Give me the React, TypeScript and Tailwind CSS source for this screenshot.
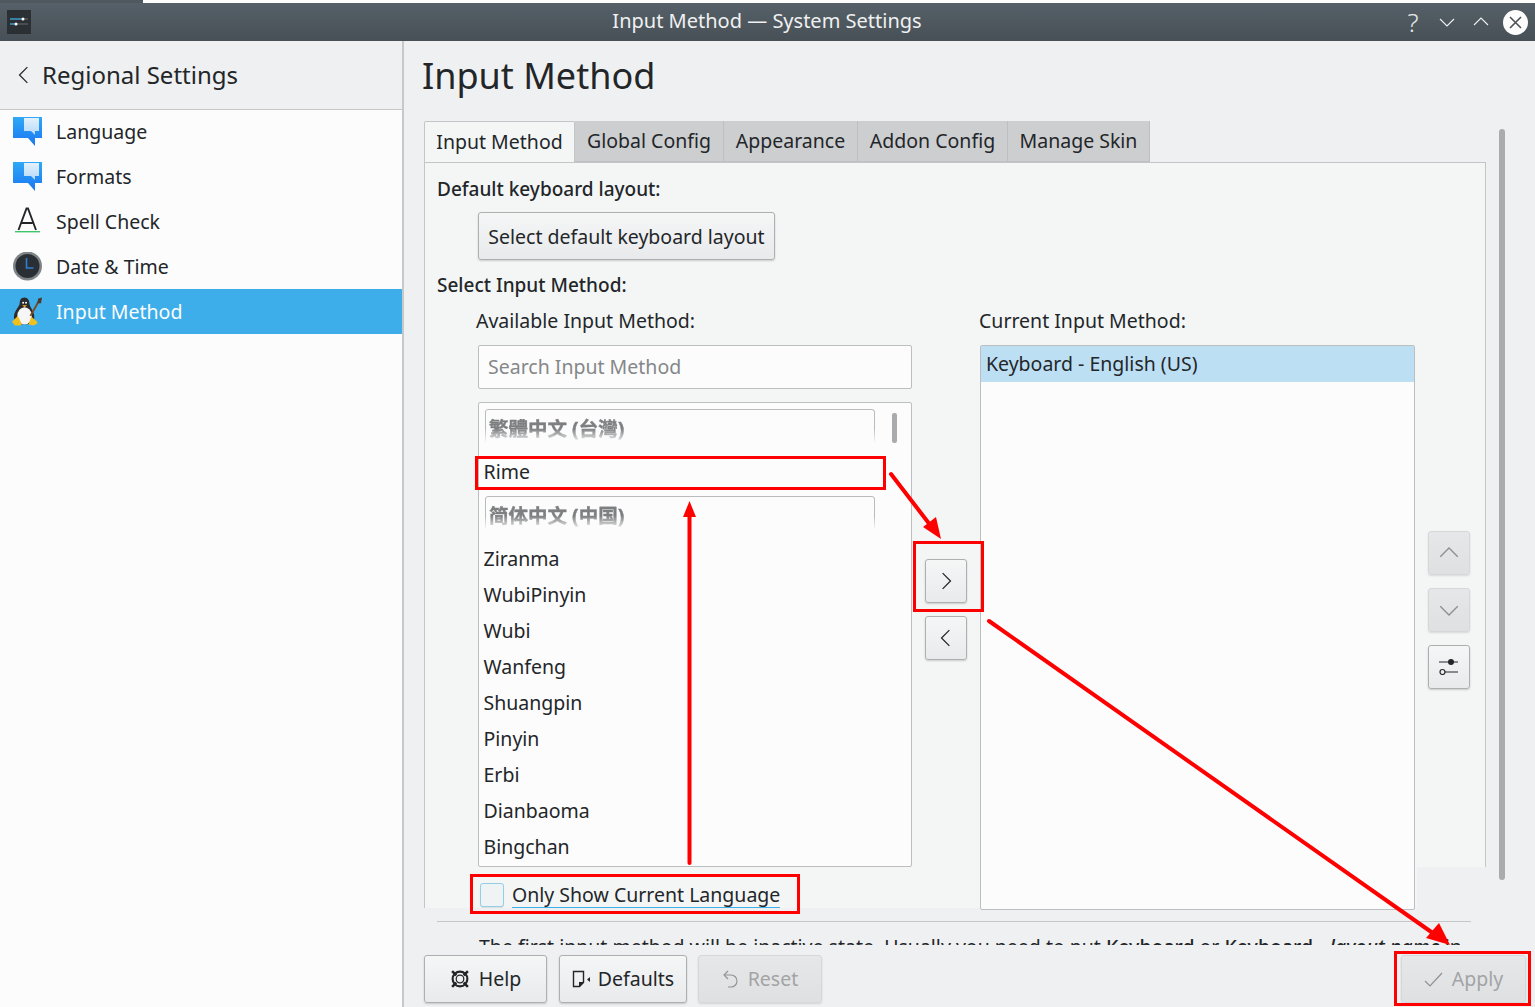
import React from "react";

const btn = "flex items-center justify-center rounded-[3px] border border-[#adafb1] bg-gradient-to-b from-[#f5f6f6] to-[#e9eaec] shadow-[0_1px_2px_rgba(0,0,0,0.18)]";
const off = "flex items-center justify-center rounded-[3px] border border-[#d6d7d9] bg-gradient-to-b from-[#e6e7e9] to-[#dfe0e2] shadow-[0_1px_2px_rgba(0,0,0,0.12)]";

function Bubble({ id }: { id: string }) {
  return (
    <svg width="30" height="30" viewBox="0 0 30 30">
      <defs>
        <linearGradient id={`bb${id}`} x1="0" y1="0" x2="0" y2="1"><stop offset="0" stopColor="#2fa8f6" /><stop offset="1" stopColor="#1a76f2" /></linearGradient>
        <linearGradient id={`bw${id}`} x1="0" y1="0" x2="0" y2="1"><stop offset="0" stopColor="#e4f1fc" /><stop offset="1" stopColor="#b5d9f8" /></linearGradient>
      </defs>
      <path d="M0 0h29v21h-7v8l-7-8H0z" fill={`url(#bb${id})`} />
      <path d="M11 1h15v13h-4v4l-4-4h-7z" fill={`url(#bw${id})`} />
    </svg>
  );
}
function SpellA() {
  return (
    <svg width="30" height="30" viewBox="0 0 30 30">
      <path d="M5.500 23 13.500 1.500h1.500L23 23M8.500 16h11" fill="none" stroke="#232629" strokeWidth="1.9" />
      <rect x="2" y="24" width="25" height="1.4" fill="#3fc66d" />
    </svg>
  );
}
function Clock() {
  return (
    <svg width="30" height="30" viewBox="0 0 30 30">
      <circle cx="14.500" cy="14" r="14.500" fill="#7f8487" />
      <circle cx="14.500" cy="14" r="12" fill="#2a2f36" />
      <path d="M13.500 6v10h7" fill="none" stroke="#2f7fd0" strokeWidth="1.6" />
    </svg>
  );
}
function Tux() {
  return (
    <svg width="32" height="32" viewBox="0 0 32 32">
      <path d="M13 1c-4 0-5 3-5 6 0 3-6 8-6 14 0 4 3 8 11 8s10-4 10-8c0-6-5-10-5-14 0-3-2-6-5-6z" fill="#2b2b2b" />
      <ellipse cx="13" cy="20" rx="7.500" ry="9" fill="#f6f6f6" />
      <circle cx="11.500" cy="6.500" r="1" fill="#fff" /><circle cx="14.500" cy="6.500" r="1" fill="#fff" />
      <path d="M10.500 9h5l-2.500 2z" fill="#f5b921" />
      <path d="M0 26l6-6 4 8-1 2H3zM17 29l3-8 6 5v2l-4 2z" fill="#f2c01e" />
      <path d="M19 20l8-14" stroke="#7a4a22" strokeWidth="2" />
      <path d="M26 7l1-5 4-1-1 6z" fill="#4a3a30" />
    </svg>
  );
}
function Sliders() {
  return (
    <svg width="20" height="16" viewBox="0 0 20 16">
      <path d="M0 3h19M5 13h14" stroke="#232629" strokeWidth="1.2" />
      <circle cx="12" cy="3" r="3" fill="#232629" />
      <circle cx="3.500" cy="13" r="2.500" fill="#f0f1f2" stroke="#232629" strokeWidth="1.200" />
    </svg>
  );
}
function Chevron({ dir, color = "#232629", size = 16 }: { dir: "l" | "r" | "u" | "d"; color?: string; size?: number }) {
  const d = { l: "M11 1 4 8l7 7", r: "M5 1l7 7-7 7", u: "M1 11l7-7 7 7", d: "M1 5l7 7 7-7" }[dir];
  return <svg width={size} height={size} viewBox="0 0 16 16"><path d={d} fill="none" stroke={color} strokeWidth="1.1" /></svg>;
}

const nav = [
  { label: "Language", icon: <Bubble id="a" />, h: "h-[44px]" },
  { label: "Formats", icon: <Bubble id="b" />, h: "h-[45px]" },
  { label: "Spell Check", icon: <SpellA />, h: "h-[45px]" },
  { label: "Date & Time", icon: <Clock />, h: "h-[45px]" },
];
const rows = ["Ziranma", "WubiPinyin", "Wubi", "Wanfeng", "Shuangpin", "Pinyin", "Erbi", "Dianbaoma", "Bingchan"];
const tabs = [["Global Config", "w-[149px]"], ["Appearance", "w-[134px]"], ["Addon Config", "w-[150px]"], ["Manage Skin", "w-[142px]"]];

function GroupHeader({ text, font }: { text: string; font: string }) {
  return (
    <div className="ml-[6px] h-[36px] w-[390px] [mask-image:linear-gradient(to_bottom,black_55%,transparent_95%)] rounded-t-[3px] border border-b-0 border-[#b9bbbd]">
      <div className={`flex h-full items-center pl-[3px] pt-[3px] text-[19.5px] font-bold text-[#7d7f81] [-webkit-text-stroke:0.4px_#7d7f81] ${font}`}>{text}</div>
    </div>
  );
}

export default function App() {
  return (
    <div className="relative flex h-[1007px] w-[1535px] flex-col overflow-hidden bg-[#eff0f1] font-['Noto_Sans','Noto_Sans_CJK_SC',sans-serif] text-[19.5px] text-[#232629]">
      {/* Title bar */}
      <header className="flex h-[41px] shrink-0 flex-col">
        <div className="flex h-[3px] shrink-0">
          <div className="h-full w-[143px] bg-[#4f585f]" />
          <div className="h-full flex-1 bg-[#fcfcfc]" />
        </div>
        <div className="relative flex flex-1 items-center bg-gradient-to-b from-[#566068] to-[#475056] pl-[7px] pr-[7px]">
          <div className="mt-[-1px] flex h-[24px] w-[24px] flex-col justify-center gap-[3px] bg-[#2b3034] px-[3px]">
            <svg width="18" height="10" viewBox="0 0 18 10">
              <path d="M0 2h12" stroke="#3fa2d8" strokeWidth="1.4" /><path d="M12 2h6M6 7h12" stroke="#555" strokeWidth="1.4" /><path d="M0 7h6" stroke="#3fa2d8" strokeWidth="1.4" />
              <circle cx="13" cy="2" r="1.5" fill="#fff" /><circle cx="6" cy="7" r="1.5" fill="#fff" />
            </svg>
          </div>
          <div className="absolute inset-x-0 top-0 flex h-full items-center justify-center pb-[2px] pr-[1px] text-[20px] leading-none text-[#eff0f1]">Input Method — System Settings</div>
          <div className="relative ml-auto flex items-center">
            <span className="w-[16px] text-center text-[26px] font-light leading-none text-[#e6e7e8]">?</span>
            <span className="ml-[18px]"><Chevron dir="d" color="#f0f1f2" /></span>
            <span className="ml-[18px]"><Chevron dir="u" color="#f0f1f2" /></span>
            <div className="ml-[14px] flex h-[25px] w-[25px] items-center justify-center rounded-full bg-[#fcfcfc]">
              <svg width="15" height="15" viewBox="0 0 15 15"><path d="M2 2l11 11M13 2 2 13" stroke="#4a5258" strokeWidth="1.6" /></svg>
            </div>
          </div>
        </div>
      </header>

      <div className="flex min-h-0 flex-1">
        {/* Sidebar */}
        <aside className="flex w-[404px] shrink-0 flex-col border-r-2 border-[#c6c8ca]">
          <div className="flex h-[69px] shrink-0 items-center border-b border-[#c4c6c8] pl-[15px]">
            <Chevron dir="l" size={18} />
            <span className="ml-[9px] text-[24px]">Regional Settings</span>
          </div>
          <div className="flex-1 bg-[#fcfcfc]">
            {nav.map((n) => (
              <div key={n.label} className={`flex items-center pl-[13px] ${n.h}`}>
                <span className="flex w-[30px] justify-center">{n.icon}</span>
                <span className="ml-[13px]">{n.label}</span>
              </div>
            ))}
            <div className="flex h-[45px] items-center bg-[#3daee9] pl-[12px] text-[#fcfcfc]">
              <span className="flex w-[31px] justify-center"><Tux /></span>
              <span className="ml-[13px]">Input Method</span>
            </div>
          </div>
        </aside>

        {/* Main */}
        <main className="flex min-w-0 flex-1 flex-col">
          <h1 className="flex h-[68px] shrink-0 items-center pl-[18px] pt-[1px] text-[36px]">Input Method</h1>
          <div className="mt-[12px] flex items-start pl-[20px]">
            <div className="w-[1062px] shrink-0">
              <div className="flex h-[41px]">
                <div className="flex w-[151px] items-center justify-center rounded-t-[2px] border border-b-0 border-[#c3c5c7] bg-[#f4f6f6]">Input Method</div>
                {tabs.map(([t, w]) => (
                  <div key={t} className={`flex items-center justify-center border-r border-b border-[#bdbfc1] bg-[#cdced0] ${w}`}>{t}</div>
                ))}
              </div>
              <div className="relative h-[746px] border-x border-t border-[#c3c5c7] bg-[#f4f6f6] pl-[12px]">
                <div className="mt-[12px] flex h-[28px] items-center text-[19px] font-medium">Default keyboard layout:</div>
                <button className={`${btn} ml-[41px] mt-[9px] h-[48px] w-[297px] pt-[1px]`}>Select default keyboard layout</button>
                <div className="mt-[11px] flex h-[28px] items-center text-[19px] font-medium">Select Input Method:</div>
                <div className="mt-[8px] flex items-start pl-[39px]">
                  <div className="w-[437px] shrink-0">
                    <div className="flex h-[28px] items-center">Available Input Method:</div>
                    <div className="ml-[2px] mt-[10px] flex h-[44px] w-[434px] items-center rounded-[2px] border border-[#bcbebf] bg-[#fcfcfc] pl-[9px] text-[#85878a]">Search Input Method</div>
                    <div className="relative ml-[2px] mt-[13px] h-[465px] w-[434px] rounded-[2px] border border-[#bcbebf] bg-[#fcfcfc] pt-[6px]">
                      <GroupHeader text="繁體中文 (台灣)" font="font-['Noto_Sans','Noto_Sans_CJK_TC',sans-serif]" />
                      <div className="mt-[9px] flex h-[36px] items-center pl-[4.5px]">Rime</div>
                      <div className="mt-[6px]"><GroupHeader text="简体中文 (中国)" font="font-['Noto_Sans','Noto_Sans_CJK_SC',sans-serif]" /></div>
                      <div className="mt-[9px]">
                        {rows.map((r) => <div key={r} className="flex h-[36px] items-center pl-[4.5px]">{r}</div>)}
                      </div>
                      <div className="absolute right-[14px] top-[10px] h-[30px] w-[5px] rounded-[2px] bg-[#a9abad]" />
                    </div>
                    <div className="mt-[15px] flex h-[25px] items-center pl-[4px]">
                      <span className="h-[24px] w-[24px] rounded-[3px] border border-[#93cee9] bg-[#f0f3f4] shadow-[0_1px_1px_rgba(0,0,0,0.1)]" />
                      <span className="ml-[8px] border-b border-[#3daee9] leading-[25px]">Only Show Current Language</span>
                    </div>
                  </div>
                  <div className="w-[66px] shrink-0 pl-[12px] pt-[252px]">
                    <button className={`${btn} h-[44px] w-[42px]`}><Chevron dir="r" size={18} /></button>
                    <button className={`${btn} mt-[13px] h-[44px] w-[42px]`}><Chevron dir="l" size={18} /></button>
                  </div>
                  <div className="w-[436px] shrink-0">
                    <div className="flex h-[28px] items-center">Current Input Method:</div>
                    <div className="ml-[1px] mt-[10px] h-[565px] w-[435px] rounded-[2px] border border-[#bcbebf] bg-[#fcfcfc]">
                      <div className="flex h-[36px] items-center bg-[#bddff4] pl-[5px]">Keyboard - English (US)</div>
                    </div>
                  </div>
                  <div className="ml-[13px] shrink-0 pt-[224px]">
                    <button className={`${off} h-[44px] w-[42px]`}><Chevron dir="u" color="#8c8e90" size={20} /></button>
                    <button className={`${off} mt-[13px] h-[44px] w-[42px]`}><Chevron dir="d" color="#8c8e90" size={20} /></button>
                    <button className={`${btn} mt-[13px] h-[44px] w-[42px]`}><Sliders /></button>
                  </div>
                </div>
                {/* cropped lower right corner of the pasted panel */}
                <div className="absolute bottom-0 right-[-1px] h-[41px] w-[69px] bg-[#eff0f1]" />
              </div>
            </div>
            <div className="ml-[13px] mt-[8px] h-[751px] w-[6px] rounded-[3px] bg-[#a9abad]" />
          </div>
          <div className="ml-[33px] mt-[13px] h-px w-[1034px] shrink-0 bg-[#c4c6c8]" />
          <div className="ml-[33px] h-[23px] w-[1034px] shrink-0 overflow-hidden whitespace-nowrap pl-[42px] pt-[11px] leading-[27px]">The first input method will be inactive state. Usually you need to put <b className="font-medium">Keyboard</b> or <b className="font-medium">Keyboard - <i>layout name</i></b> in</div>
          <div className="mt-[10px] flex h-[48px] shrink-0 pl-[20px] pr-[9px]">
            <button className={`${btn} h-[48px] w-[123px] gap-[9px]`}>
              <svg width="20" height="20" viewBox="0 0 19 19"><circle cx="9.5" cy="9.5" r="7" fill="none" stroke="#232629" strokeWidth="2" /><circle cx="9.5" cy="9.5" r="3.6" fill="none" stroke="#232629" strokeWidth="1.2" /><path d="M2 2l4 4M17 2l-4 4M2 17l4-4M17 17l-4-4" stroke="#232629" strokeWidth="2.4" /></svg>
              Help
            </button>
            <button className={`${btn} ml-[12px] h-[48px] w-[128px] gap-[7px]`}>
              <svg width="19" height="19" viewBox="0 0 19 19"><path d="M1.5 1.5h10v11l-4 4h-6z" fill="none" stroke="#232629" strokeWidth="1.4" /><path d="M7 17l0-5h5z" fill="#232629" /><path d="M18 7v5l-3-2.5z" fill="#232629" /></svg>
              Defaults
            </button>
            <button className={`${off} ml-[11px] h-[48px] w-[124px] gap-[9px] text-[#a2a4a6]`}>
              <svg width="17" height="18" viewBox="0 0 17 18"><path d="M6 1 2 5l4 4" fill="none" stroke="#8f9193" strokeWidth="1.1" /><path d="M2 5h7a6 6 0 0 1 0 12H6" fill="none" stroke="#8f9193" strokeWidth="1.1" /></svg>
              Reset
            </button>
            <button className={`${off} ml-auto h-[48px] w-[125px] gap-[9px] text-[#a2a4a6]`}>
              <svg width="19" height="15" viewBox="0 0 19 15"><path d="M1 9l5 5L18 1" fill="none" stroke="#8f9193" strokeWidth="1.2" /></svg>
              Apply
            </button>
          </div>
        </main>
      </div>

      {/* Red annotations drawn over the screenshot */}
      <svg className="pointer-events-none absolute left-0 top-0" width="1535" height="1007" viewBox="0 0 1535 1007">
        <g fill="none" stroke="#ff0000" strokeWidth="3">
          <rect x="476.5" y="457.5" width="408" height="31" />
          <rect x="914.5" y="542.5" width="68" height="68" />
          <rect x="471.5" y="875.5" width="327" height="37" />
          <rect x="1395.5" y="952.5" width="134" height="52" />
        </g>
        <g stroke="#ff0000" strokeWidth="4" fill="none" strokeLinecap="round">
          <path d="M891 474 934 530" />
          <path d="M689.500 863V512" />
          <path d="M989 621 1437 936" />
        </g>
        <g fill="#ff0000">
          <path d="M941 539 923 527 936 517 z" />
          <path d="M689.500 501 696 517 H683 z" />
          <path d="M1450 945 1426 938 1439 923 z" />
        </g>
      </svg>
    </div>
  );
}
